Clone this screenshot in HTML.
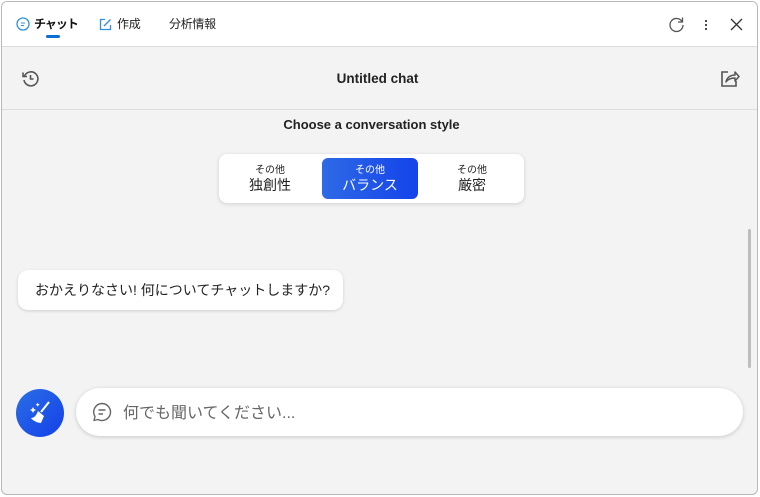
<!DOCTYPE html><html><head><style>
*{margin:0;padding:0;box-sizing:border-box}
body{width:760px;height:497px;background:#fff;font-family:"Liberation Sans","Noto Sans CJK JP",sans-serif;overflow:hidden;position:relative}
.win{position:absolute;left:1px;top:1px;width:757px;height:494px;border:1px solid #b8b8b8;border-radius:6px;background:#f3f3f3;overflow:hidden}
.top{position:absolute;left:0;top:0;width:100%;height:45px;background:#fff;border-bottom:1px solid #dcdcdc}
.tab{position:absolute;top:13px;font-size:12px;color:#222;letter-spacing:-0.3px}
.hdr{position:absolute;top:45px;left:0;width:100%;height:63px;border-bottom:1px solid #dcdcdc}
.abs{position:absolute}
</style></head><body><div class="win">
<div class="top">
 <svg class="abs" style="left:14px;top:15px" width="14" height="14" viewBox="0 0 14 14"><circle cx="7" cy="7" r="6" fill="none" stroke="#2f8fe0" stroke-width="1.3"/><path d="M5 6h4M5 8.5h3" stroke="#2f8fe0" stroke-width="1.1"/></svg>
 <div class="tab" style="left:32px;font-weight:bold;color:#111;letter-spacing:-1px">チャット</div>
 <div class="abs" style="left:44px;top:33px;width:14px;height:3px;background:#0a6fd6;border-radius:2px"></div>
 <svg class="abs" style="left:97px;top:16px" width="13" height="13" viewBox="0 0 13 13"><path d="M6 1.5H1.5v10h10V7" fill="none" stroke="#2f8fe0" stroke-width="1.3"/><path d="M5 8l6.5-6.5" stroke="#2f8fe0" stroke-width="1.3"/></svg>
 <div class="tab" style="left:115px">作成</div>
 <div class="tab" style="left:167px">分析情報</div>
 <svg class="abs" style="left:666px;top:14px" width="17" height="17" viewBox="0 0 17 17"><path d="M14 5.5A6.5 6.5 0 1 0 15 9" fill="none" stroke="#555" stroke-width="1.3"/><path d="M14.5 1.5v4.5h-4.5" fill="none" stroke="#555" stroke-width="1.3"/></svg>
 <div class="abs" style="left:703px;top:17px;width:2px;height:12px;background:radial-gradient(circle,#333 45%,transparent 50%) 0 0/2px 4px"></div>
 <svg class="abs" style="left:728px;top:16px" width="13" height="13" viewBox="0 0 13 13"><path d="M1 1l11 11M12 1L1 12" stroke="#333" stroke-width="1.3"/></svg>
</div>
<div class="hdr">
 <svg class="abs" style="left:19px;top:22px" width="19" height="19" viewBox="0 0 19 19"><path d="M3.5 7A7 7 0 1 1 3 11" fill="none" stroke="#555" stroke-width="1.6"/><path d="M2 3.5v4h4" fill="none" stroke="#555" stroke-width="1.6"/><path d="M9.5 6v4h3" fill="none" stroke="#555" stroke-width="1.6"/></svg>
 <div class="abs" style="left:-2px;width:100%;top:24px;text-align:center;font-size:13.5px;font-weight:bold;color:#222">Untitled chat</div>
 <svg class="abs" style="left:718px;top:22px" width="20" height="19" viewBox="0 0 20 19"><path d="M8 3H2v14h14v-5" fill="none" stroke="#555" stroke-width="1.6"/><path d="M6 13c1-5 5-7 9-7V3l4 4.5-4 4.5V9c-4 0-7 1-9 4z" fill="none" stroke="#555" stroke-width="1.5" stroke-linejoin="round"/></svg>
</div>
<div class="abs" style="left:-8px;width:100%;top:115px;text-align:center;font-size:13px;font-weight:bold;color:#222">Choose a conversation style</div>
<div class="abs" style="left:217px;top:152px;width:305px;height:49px;background:#fff;border-radius:8px;box-shadow:0 1px 4px rgba(0,0,0,.15)">
 <div class="abs" style="left:0;top:7px;width:102px;text-align:center;color:#222"><div style="font-size:10px">その他</div><div style="font-size:14px;margin-top:-1px">独創性</div></div>
 <div class="abs" style="left:103px;top:4px;width:96px;height:41px;border-radius:6px;background:linear-gradient(90deg,#2e6ae6,#1443ea);color:#fff;text-align:center;padding-top:3px"><div style="font-size:10px">その他</div><div style="font-size:14px;margin-top:-1px">バランス</div></div>
 <div class="abs" style="left:202px;top:7px;width:102px;text-align:center;color:#222"><div style="font-size:10px">その他</div><div style="font-size:14px;margin-top:-1px">厳密</div></div>
</div>
<div class="abs" style="left:746px;top:227px;width:3px;height:139px;background:#bdbdbd;border-radius:2px"></div>
<div class="abs" style="left:16px;top:268px;width:325px;height:40px;background:#fff;border-radius:10px;box-shadow:0 1px 3px rgba(0,0,0,.15);font-size:14px;color:#222;padding:10px 0 0 17px;white-space:nowrap">おかえりなさい! 何についてチャットしますか?</div>
<div class="abs" style="left:14px;top:387px;width:48px;height:48px;border-radius:50%;background:linear-gradient(135deg,#2a6ee6,#1440e8)">
 <svg class="abs" style="left:12px;top:11px" width="24" height="26" viewBox="0 0 24 26"><path d="M21 2l-8 10" stroke="#fff" stroke-width="2"/><path d="M10 11l6 5-3 7c-3 0-8-2-10-5 3 0 5-2 7-7z" fill="#fff"/><path d="M4 9l1-2 1 2 2 1-2 1-1 2-1-2-2-1z M9 4l.7-1.4.7 1.4 1.4.7-1.4.7-.7 1.4-.7-1.4-1.4-.7z" fill="#fff"/></svg>
</div>
<div class="abs" style="left:74px;top:386px;width:667px;height:48px;background:#fff;border-radius:24px;box-shadow:0 1px 4px rgba(0,0,0,.18)">
 <svg class="abs" style="left:16px;top:14px" width="20" height="20" viewBox="0 0 20 20"><path d="M10 1.5a8.5 8.5 0 1 1-4 16l-4 1 1-4A8.5 8.5 0 0 1 10 1.5z" fill="none" stroke="#666" stroke-width="1.4" stroke-linejoin="round"/><path d="M6.5 8h7M6.5 12h4.5" stroke="#666" stroke-width="1.4"/></svg>
 <div class="abs" style="left:47px;top:11px;font-size:16px;color:#666">何でも聞いてください...</div>
</div>
</div></body></html>
